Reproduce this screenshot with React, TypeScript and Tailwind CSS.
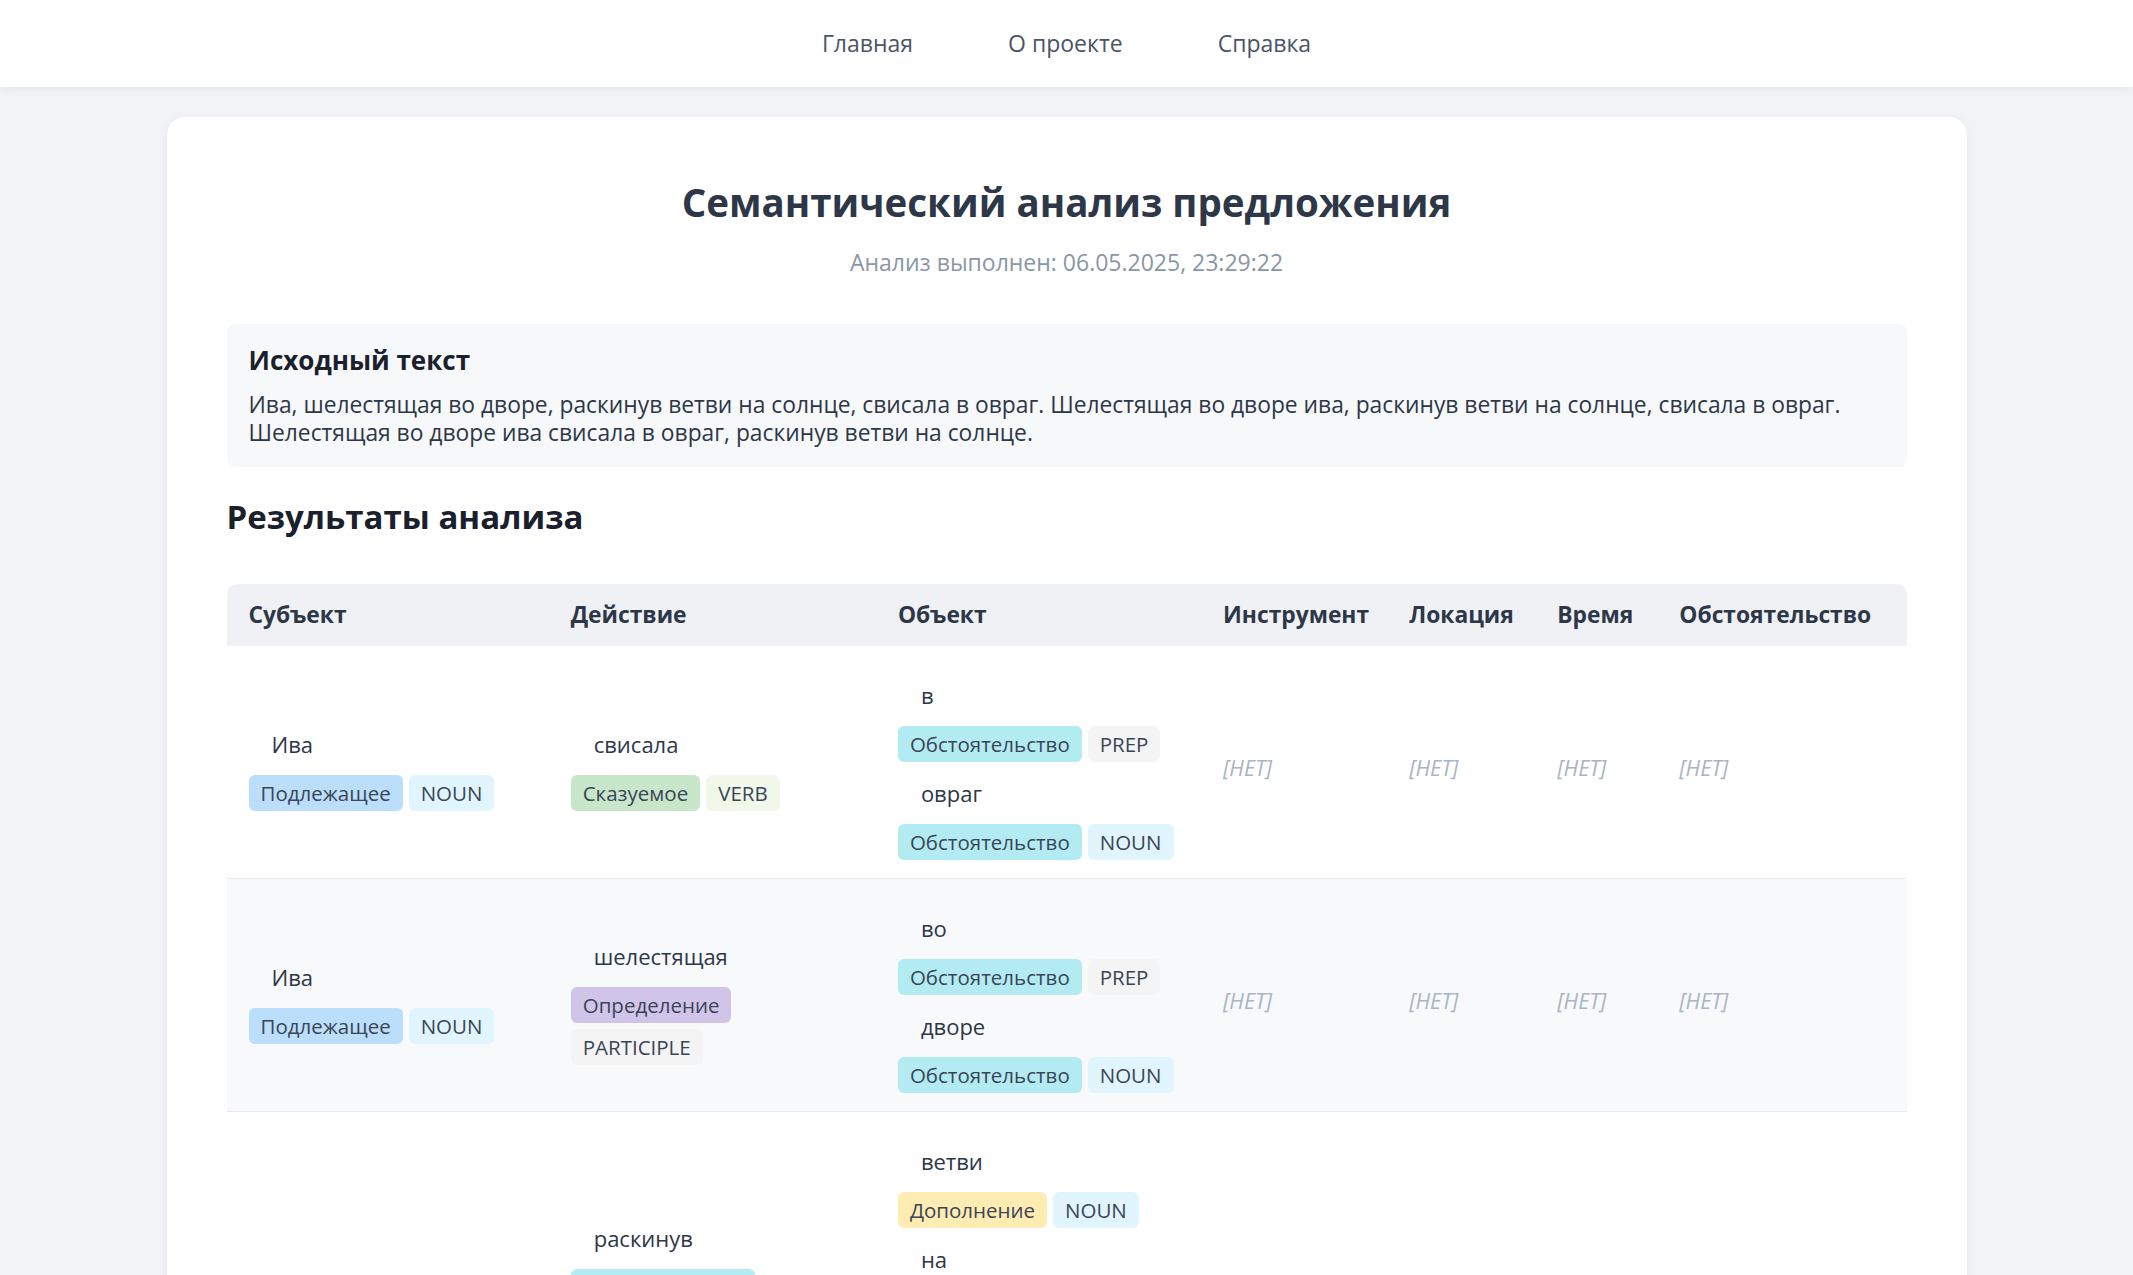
import React from "react";

type Tag = { label: string; kind: string };
type Token = { word: string; tags: Tag[] };
type Row = {
    subject: Token[] | null;
    action: Token[] | null;
    object: Token[] | null;
};

// tag colours, roughly material 100/50 shades
const TAG_STYLES: Record<string, string> = {
    subj: "bg-[#bbdefb]",
    pred: "bg-[#c8e6c9]",
    attr: "bg-[#d1c4e9]",
    circ: "bg-[#b2ebf2]",
    obj: "bg-[#ffecb3]",
    noun: "bg-[#e1f5fe]",
    verb: "bg-[#f1f8e9]",
    other: "bg-[#f4f4f5]",
};

const circ = (pos: string, kind: string): Tag[] => [
    { label: "Обстоятельство", kind: "circ" },
    { label: pos, kind },
];

const ROWS: Row[] = [
    {
        subject: [{ word: "Ива", tags: [{ label: "Подлежащее", kind: "subj" }, { label: "NOUN", kind: "noun" }] }],
        action: [{ word: "свисала", tags: [{ label: "Сказуемое", kind: "pred" }, { label: "VERB", kind: "verb" }] }],
        object: [
            { word: "в", tags: circ("PREP", "other") },
            { word: "овраг", tags: circ("NOUN", "noun") },
        ],
    },
    {
        subject: [{ word: "Ива", tags: [{ label: "Подлежащее", kind: "subj" }, { label: "NOUN", kind: "noun" }] }],
        action: [{ word: "шелестящая", tags: [{ label: "Определение", kind: "attr" }, { label: "PARTICIPLE", kind: "other" }] }],
        object: [
            { word: "во", tags: circ("PREP", "other") },
            { word: "дворе", tags: circ("NOUN", "noun") },
        ],
    },
    {
        subject: null,
        action: [{ word: "раскинув", tags: circ("GERUND", "other") }],
        object: [
            { word: "ветви", tags: [{ label: "Дополнение", kind: "obj" }, { label: "NOUN", kind: "noun" }] },
            { word: "на", tags: circ("PREP", "other") },
            { word: "солнце", tags: circ("NOUN", "noun") },
        ],
    },
    {
        subject: [{ word: "ива", tags: [{ label: "Подлежащее", kind: "subj" }, { label: "NOUN", kind: "noun" }] }],
        action: [{ word: "свисала", tags: [{ label: "Сказуемое", kind: "pred" }, { label: "VERB", kind: "verb" }] }],
        object: [
            { word: "в", tags: circ("PREP", "other") },
            { word: "овраг", tags: circ("NOUN", "noun") },
        ],
    },
];

const COLUMNS = [
    { title: "Субъект", w: "w-[322px]" },
    { title: "Действие", w: "w-[327px]" },
    { title: "Объект", w: "w-[325px]" },
    { title: "Инструмент", w: "w-[186px]" },
    { title: "Локация", w: "w-[148px]" },
    { title: "Время", w: "w-[122px]" },
    { title: "Обстоятельство", w: "w-[249px]" },
];

function Empty() {
    return <span className="italic text-[#a9b4c4] text-[21.5px]">[НЕТ]</span>;
}

function Tokens({ tokens }: { tokens: Token[] | null }) {
    if (!tokens) return <Empty />;
    return (
        <div className="flex flex-col gap-[13px]">
            {tokens.map((t, i) => (
                <React.Fragment key={i}>
                    <div className="h-[36px] flex items-center pl-[23px] text-[22px] font-medium text-[#2d3748]">
                        {t.word}
                    </div>
                    <div className="flex flex-wrap gap-[6px]">
                        {t.tags.map((tag, j) => (
                            <span
                                key={j}
                                className={`h-[36px] px-[12px] flex items-center rounded-[6px] text-[20.5px] text-[#3a4556] ${TAG_STYLES[tag.kind]}`}
                            >
                                {tag.label}
                            </span>
                        ))}
                    </div>
                </React.Fragment>
            ))}
        </div>
    );
}

export default function App() {
    return (
        <div className="min-h-screen bg-[#f1f3f6] font-['Open_Sans',sans-serif] text-[#2d3748]">
            {/* Top nav */}
            <nav className="h-[87px] bg-white shadow-[0_2px_10px_rgba(0,0,0,0.06)] flex items-center justify-center gap-[95px] text-[23px] text-[#4a5568]">
                <a>Главная</a>
                <a>О проекте</a>
                <a>Справка</a>
            </nav>

            <main className="pt-[30px] pb-[60px]">
                <div className="w-[1800px] mx-auto bg-white rounded-[18px] shadow-[0_2px_12px_rgba(0,0,0,0.05)] px-[60px] pt-[61px] pb-[60px]">
                    <header className="text-center">
                        <h1 className="text-[38.5px] leading-[48px] font-bold text-[#2d3748]">
                            Семантический анализ предложения
                        </h1>
                        <p className="mt-[22px] text-[23px] leading-[28px] text-[#8a96a8]">
                            Анализ выполнен: 06.05.2025, 23:29:22
                        </p>
                    </header>

                    <section className="mt-[48px] bg-[#f7f8fa] rounded-[8px] px-[22px] pt-[21px] pb-[20px]">
                        <h3 className="text-[26px] leading-[30px] font-bold text-[#1a202c]">Исходный текст</h3>
                        <p className="mt-[16px] text-[22.8px] leading-[28px] text-[#2d3748]">
                            Ива, шелестящая во дворе, раскинув ветви на солнце, свисала в овраг. Шелестящая во дворе ива, раскинув ветви на солнце, свисала в овраг. Шелестящая во дворе ива свисала в овраг, раскинув ветви на солнце.
                        </p>
                    </section>

                    <h2 className="mt-[31px] text-[33px] leading-[38px] font-bold text-[#1a202c]">Результаты анализа</h2>

                    <div className="mt-[48px] rounded-t-[10px] overflow-hidden">
                        <table className="w-full table-fixed border-collapse">
                            <colgroup>
                                {COLUMNS.map((c) => (
                                    <col key={c.title} className={c.w} />
                                ))}
                            </colgroup>
                            <thead>
                                <tr className="bg-[#eff1f5] h-[62px]">
                                    {COLUMNS.map((c) => (
                                        <th key={c.title} className="px-[22px] text-left text-[22.8px] font-bold text-[#2d3748]">
                                            {c.title}
                                        </th>
                                    ))}
                                </tr>
                            </thead>
                            <tbody>
                                {ROWS.map((r, i) => (
                                    <tr key={i} className={`border-b border-[#e6eaf0] ${i % 2 === 1 ? "bg-[#f8f9fb]" : "bg-white"}`}>
                                        <td className="px-[22px] pt-[31px] pb-[18px] align-middle">
                                            <Tokens tokens={r.subject} />
                                        </td>
                                        <td className="px-[22px] pt-[31px] pb-[18px] align-middle">
                                            <Tokens tokens={r.action} />
                                        </td>
                                        <td className="px-[22px] pt-[31px] pb-[18px] align-middle">
                                            <Tokens tokens={r.object} />
                                        </td>
                                        {[0, 1, 2, 3].map((k) => (
                                            <td key={k} className="px-[22px] pt-[31px] pb-[18px] align-middle">
                                                <Empty />
                                            </td>
                                        ))}
                                    </tr>
                                ))}
                            </tbody>
                        </table>
                    </div>
                </div>
            </main>
        </div>
    );
}
